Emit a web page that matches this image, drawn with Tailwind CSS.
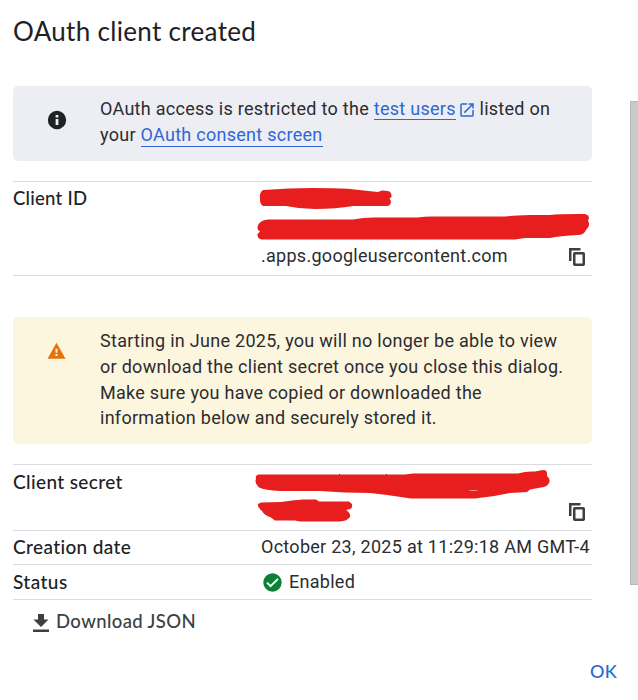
<!DOCTYPE html>
<html lang="en">
<head>
<meta charset="utf-8">
<title>OAuth client created</title>
<script src="https://cdn.jsdelivr.net/npm/@tailwindcss/browser@4"></script>
</head>
<body class="bg-white">
<main class="relative flex h-[700px] w-[638px] flex-col overflow-hidden bg-white pl-[13px] font-['Roboto',sans-serif] text-[18px] leading-[25.7px] tracking-[0.278px] text-[#2b2c30]">
  <h1 class="mt-[14px] h-[72px] font-['Lato',sans-serif] text-[26px] leading-[34px] tracking-[0.32px] text-[#202124]">OAuth client created</h1>

  <section class="flex h-[75px] w-[579px] rounded-[5px] bg-[#edeef3] pt-[10px]">
    <svg class="ml-[33px] mt-[12.500px] size-[22px] shrink-0" viewBox="0 0 24 24" fill="#202124"><path d="M12 2a10 10 0 1 0 0 20 10 10 0 0 0 0-20zm1.500 15.500h-3V11h3v6.500zm0-8.300h-3V6.600h3v2.600z"/></svg>
    <p class="ml-[32px] whitespace-nowrap">OAuth access is restricted to the <a class="border-b border-[#2e67d6] text-[#2e67d6]">test users</a><svg class="ml-[2px] mr-[-1px] inline-block size-[18px] align-[-4px]" viewBox="0 0 24 24" fill="#2e67d6"><path d="M19 19H5V5h7V3H5a2 2 0 0 0-2 2v14a2 2 0 0 0 2 2h14a2 2 0 0 0 2-2v-7h-2v7zM14 3v2h3.590l-9.830 9.830 1.410 1.410L19 6.410V10h2V3h-7z"/></svg> listed on<br>your <a class="border-b border-[#2e67d6] pb-[1px] text-[#2e67d6]">OAuth consent screen</a></p>
  </section>

  <section class="relative mt-[20px] flex h-[95px] w-[579px] border-y border-[#dadce0]">
    <h2 class="w-[248px] pt-[4px] font-['Lato',sans-serif] text-[18.500px] font-medium tracking-[0.25px] text-[#202124]">Client ID</h2>
    <div class="flex flex-1 items-end justify-between pb-[6px]">
      <span>.apps.googleusercontent.com</span>
      <svg class="mb-[3px] mr-[7px] h-[18px] w-[16px]" viewBox="0 0 16 18"><path d="M1.250 13V1.250H11.500" fill="none" stroke="#3c4043" stroke-width="2.500"/><rect x="5.250" y="5.250" width="9.500" height="11.500" rx=".5" fill="none" stroke="#3c4043" stroke-width="2.500"/></svg>
    </div>
    <svg class="absolute left-[237px] top-[-2px] h-[100px] w-[342px]" viewBox="250 180 342 100" fill="#e81e1e"><path d="M263 190 Q290 188 312 188 Q342 188 350 189 L373 191.500 L378 192 L382 190.500 L388 191 Q392 192 391.500 197 L389.500 198.500 L391 201 Q391 205 388 206 L353 206 Q336 209 315 209 Q300 209 286 206 L263 206 Q260 204 260 200 Q259 192 263 190z"/><path d="M268 219.500 L353 219.500 Q363 217.500 374 217.500 L417 217.500 Q425 216.500 432 216.500 L505 216.500 Q515 215.500 530 215 L550 215 Q560 213.800 585 214 Q589 215 589 218 L588 221 Q591 225 586 230 Q584 235 578 235 Q560 236 550 238 L525 238 L515 239.500 L262 239.500 Q257 239 257.500 234 L260 231.500 Q257 230 257.500 227 Q259 220 268 219.500z"/></svg>
  </section>

  <section class="mt-[41px] flex h-[127px] w-[579px] rounded-[5px] bg-[#fdf6df] pt-[11px]">
    <svg class="ml-[34px] mt-[14px] h-[17px] w-[19px] shrink-0" viewBox="0 0 19 17" fill="#e8710a"><path fill-rule="evenodd" d="M9.500 .7 18.500 16.700H.500L9.500 .7zM8.500 6.800v4h2v-4h-2zm0 5.300v2h2v-2h-2z"/></svg>
    <p class="ml-[34px] whitespace-nowrap leading-[25.8px]">Starting in June 2025, you will no longer be able to view<br>or download the client secret once you close this dialog.<br>Make sure you have copied or downloaded the<br>information below and securely stored it.</p>
  </section>

  <section class="relative mt-[20px] flex h-[67px] w-[579px] border-y border-[#dadce0]">
    <h2 class="w-[248px] pt-[4px] font-['Lato',sans-serif] text-[19px] font-medium tracking-[0.38px] text-[#202124]">Client secret</h2>
    <div class="flex flex-1 items-end justify-end pb-[9px]">
      <svg class="mr-[7px] h-[18px] w-[16px]" viewBox="0 0 16 18"><path d="M1.250 13V1.250H11.500" fill="none" stroke="#3c4043" stroke-width="2.500"/><rect x="5.250" y="5.250" width="9.500" height="11.500" rx=".5" fill="none" stroke="#3c4043" stroke-width="2.500"/></svg>
    </div>
    <svg class="absolute left-[232px] top-[-5px] h-[75px] w-[347px]" viewBox="245 460 347 75" fill="#e81e1e"><path d="M259 474.500 L405 474.500 L413 473.500 L518 473.500 Q526 471 535 471.500 L543 470 Q547 470 547 473 L547 476 Q551 479 549 483 Q547 487 541 487.500 L530 489.500 L527 492 L510 493 Q492 497 475 498.500 L411 498.500 Q390 495 370 493 Q345 493 320 491 L280 491 Q265 490 259 487.500 Q254 483 256 479 Q255 475 259 474.500z"/><path d="M261 502.500 L281 502 Q292 500 303 499.500 L316 499.500 L319 501.500 L349 501.500 Q353 504 352 507 Q351 509.500 346 510 Q351 513 350 517 Q347 521 340 521.500 L300 521.500 L295 520.500 L275 520.500 L271 517.500 Q264 515 262 511 Q257 507 258 504z"/><path d="M468 490.500 Q473 489.700 479 490.500 Q473 491.500 468 490.500z" fill="#f6a5a2"/><path d="M339 474h1v1h-1zM386 474h1v1h-1z" fill="#7b1c1c"/></svg>
  </section>

  <section class="flex h-[34px] w-[579px] items-center border-b border-[#dadce0] pb-[1px]">
    <h2 class="w-[248px] font-['Lato',sans-serif] text-[19px] font-medium tracking-[0.38px] text-[#202124]">Creation date</h2>
    <span class="whitespace-nowrap">October 23, 2025 at 11:29:18 AM GMT-4</span>
  </section>
  <section class="flex h-[35px] w-[579px] items-center border-b border-[#dadce0]">
    <h2 class="w-[248px] font-['Lato',sans-serif] text-[19px] font-medium tracking-[0.45px] text-[#202124]">Status</h2>
    <svg class="ml-[2px] mr-[7px] size-[19px]" viewBox="0 0 19 19"><circle cx="9.500" cy="9.500" r="9.200" fill="#0b8037"/><path d="M4 9.600l3.600 3.600 7.300-7.300" fill="none" stroke="#fff" stroke-width="2"/></svg>
    <span>Enabled</span>
  </section>

  <div class="flex h-[44px] items-center pl-[20px] font-['Lato',sans-serif] text-[18.500px] font-medium tracking-[0.4px] text-[#3c4043]">
    <svg class="mr-[7px] mt-[1px] h-[18px] w-[16px]" viewBox="0 0 16 18" fill="#3c4043"><path d="M5 0h6v5.500h4.500L8 13 .500 5.500H5zM0 15.500h16V18H0z"/></svg>
    <span>Download JSON</span>
  </div>
  <div class="mt-[15px] flex justify-end pr-[21px] font-['Lato',sans-serif] font-medium text-[#2e67d6]">OK</div>

  <div class="absolute left-[630px] top-[101px] h-[484px] w-[8px] border-y border-l border-[#b8b8b8] bg-[#cacaca]"></div>
</main>
</body>
</html>
